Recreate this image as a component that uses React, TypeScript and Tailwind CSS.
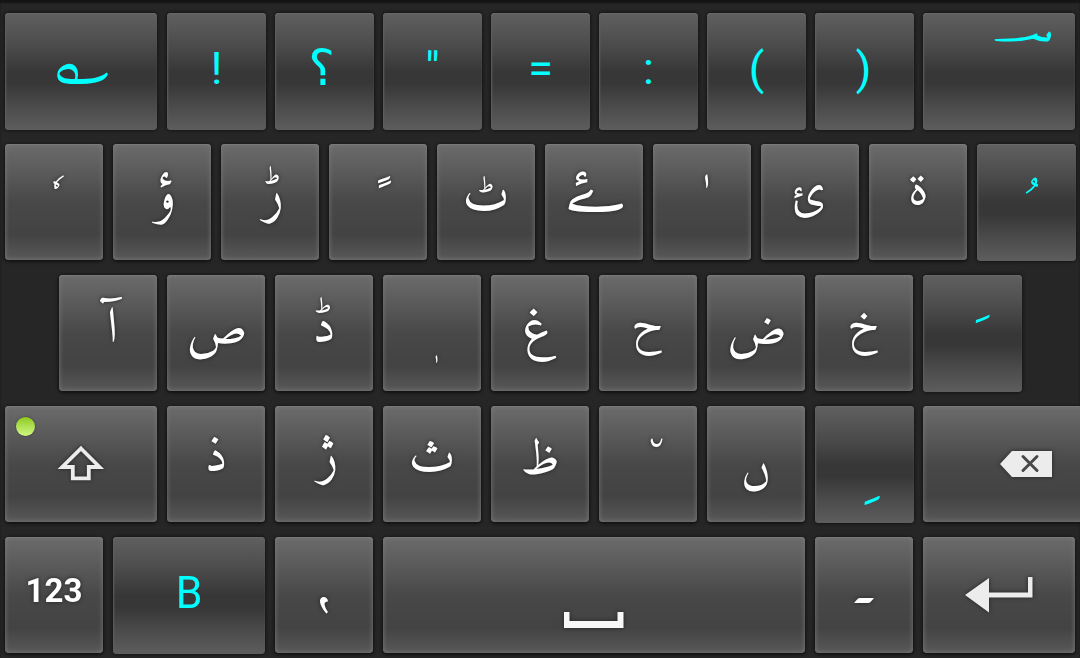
import type { ReactNode } from "react";
import clsx from "clsx";

interface KeyDef {
    id: string;
    label: ReactNode;
    // classes that size and place the label inside its key
    place?: string;
    width?: string;
    alt?: boolean;
    font?: "amiri" | "naskh" | "dejavu" | "latin";
}

const fontClass = {
    amiri: "font-[Amiri,'DejaVu_Sans',serif]",
    naskh: "font-['Noto_Naskh_Arabic','DejaVu_Sans',serif]",
    dejavu: "font-['DejaVu_Sans',sans-serif]",
    latin: "font-[Roboto,sans-serif]",
};

const ShiftIcon = () => (
    <svg width="48" height="38" viewBox="0 0 48 38" fill="none">
        <path d="M24 3.5 L42.5 22 H31.8 V33.4 H15.8 V22 H5.2 Z" stroke="#ececec" strokeWidth="3.8" />
    </svg>
);

const DeleteIcon = () => (
    <svg width="52" height="28" viewBox="0 0 52 28">
        <path d="M0 14 L12 1 H52 V27 H12 Z" fill="#ececec" />
        <path d="M23 6.5 L37 20.5 M37 6.5 L23 20.5" stroke="#484848" strokeWidth="3" strokeLinecap="round" />
    </svg>
);

const SpaceIcon = () => (
    <svg width="62" height="18" viewBox="0 0 62 18">
        <path d="M1 1 H6.5 V10 H54.5 V1 H60.5 V17 H1 Z" fill="#f7f7f7" />
    </svg>
);

const EnterIcon = () => (
    <svg width="68" height="36" viewBox="0 0 68 36">
        <path d="M0 18 L24 1 V15.5 H63 V0 H67.5 V20.5 H24 V35.5 Z" fill="#ececec" />
    </svg>
);

const rows: { id: string; className?: string; keys: KeyDef[] }[] = [
    {
        id: "symbols",
        keys: [
            { id: "verse", label: "\u060e", alt: true, font: "naskh", width: "w-[152px]", place: "mt-[24px] text-[66px]" },
            { id: "exclaim", label: "!", alt: true, font: "latin", place: "mt-[33px] text-[45px]" },
            { id: "question", label: "؟", alt: true, font: "dejavu", place: "mt-[30px] -ml-[6px] text-[50px]" },
            { id: "quote", label: '"', alt: true, font: "latin", place: "mt-[33px] text-[45px]" },
            { id: "equals", label: "=", alt: true, font: "latin", place: "mt-[33px] text-[45px]" },
            { id: "colon", label: ":", alt: true, font: "latin", place: "mt-[33px] text-[45px]" },
            { id: "paren-l", label: "(", alt: true, font: "latin", place: "mt-[33px] text-[45px]" },
            { id: "paren-r", label: ")", alt: true, font: "latin", place: "mt-[33px] -ml-[2px] text-[45px]" },
            { id: "takhallus", label: "\u00a0\u0614", alt: true, font: "amiri", width: "w-[152px]", place: "mt-[10px] ml-[34px] text-[126px] scale-y-60" },
        ],
    },
    {
        id: "top",
        keys: [
            { id: "inverted-damma", label: "\u00a0\u0657", font: "amiri", place: "mt-[50px] text-[44px]" },
            { id: "waw-hamza", label: "ؤ", font: "amiri", place: "mt-[28px] ml-[8px] text-[50px] scale-y-120" },
            { id: "rreh", label: "ڑ", font: "amiri", place: "mt-[27px] ml-[8px] text-[50px] scale-y-120" },
            { id: "fathatan", label: "\u00a0\u064b", font: "naskh", place: "mt-[17px] ml-[14px] text-[60px]" },
            { id: "tteh", label: "ٹ", font: "amiri", place: "mt-[29px] text-[50px] scale-y-110" },
            { id: "yeh-barree-hamza", label: "ۓ", font: "naskh", place: "mt-[17px] text-[72px] scale-x-110" },
            { id: "super-alef", label: "\u00a0\u0670", font: "naskh", place: "mt-[20px] ml-[9px] text-[52px]" },
            { id: "yeh-hamza", label: "ئ", font: "naskh", place: "mt-[21px] -ml-[4px] text-[55px]" },
            { id: "teh-marbuta", label: "ة", font: "naskh", place: "mt-[26px] text-[50px]" },
            { id: "damma", label: "\u00a0\u064f", alt: true, font: "amiri", place: "mt-[55px] text-[52px]" },
        ],
    },
    {
        id: "home",
        className: "pl-[54px]",
        keys: [
            { id: "alef-madda", label: "آ", font: "amiri", place: "mt-[30px] ml-[9px] text-[50px]" },
            { id: "sad", label: "ص", font: "amiri", place: "mt-[36px] ml-[2px] text-[50px]" },
            { id: "ddal", label: "ڈ", font: "amiri", place: "mt-[28px] text-[53px]" },
            { id: "sub-alef", label: "\u00a0\u0656", font: "naskh", place: "mt-[56px] ml-[9px] text-[30px]" },
            { id: "ghain", label: "غ", font: "naskh", place: "mt-[31px] -ml-[4px] text-[56px]" },
            { id: "hah", label: "ح", font: "naskh", place: "mt-[32px] -ml-[2px] text-[50px]" },
            { id: "dad", label: "ض", font: "amiri", place: "mt-[37px] ml-[2px] text-[49px]" },
            { id: "khah", label: "خ", font: "naskh", place: "mt-[32px] -ml-[2px] text-[50px]" },
            { id: "fatha", label: "\u00a0\u064e", alt: true, font: "naskh", place: "mt-[16px] ml-[20px] text-[68px]" },
        ],
    },
    {
        id: "bottom",
        keys: [
            { id: "shift", label: <ShiftIcon />, width: "w-[152px]", place: "mt-[39px]" },
            { id: "thal", label: "ذ", font: "amiri", place: "mt-[27px] text-[52px]" },
            { id: "jeh", label: "ژ", font: "amiri", place: "mt-[27px] ml-[9px] text-[50px] scale-y-115" },
            { id: "theh", label: "ث", font: "amiri", place: "mt-[29px] text-[50px]" },
            { id: "zah", label: "ظ", font: "amiri", place: "mt-[31px] text-[50px]" },
            { id: "ghunna-mark", label: "\u00a0\u0658", font: "naskh", place: "mt-[13px] ml-[17px] text-[62px]" },
            { id: "noon-ghunna", label: "ں", font: "amiri", place: "mt-[43px] text-[53px]" },
            { id: "kasra", label: "\u00a0\u0650", alt: true, font: "naskh", place: "mt-[30px] ml-[15px] text-[75px]" },
            { id: "delete", label: <DeleteIcon />, width: "w-[206px]", place: "mt-[44px]" },
        ],
    },
    {
        id: "space-row",
        keys: [
            { id: "numbers", label: "123", font: "latin", place: "mt-[37px] text-[33px] font-bold" },
            { id: "mode", label: "B", alt: true, font: "latin", width: "w-[152px]", place: "mt-[33px] text-[45px] scale-x-95" },
            { id: "comma", label: "،", font: "naskh", place: "mt-[46px] text-[62px] -scale-y-100" },
            { id: "space", label: <SpaceIcon />, width: "w-[422px]", place: "mt-[74px]" },
            { id: "full-stop", label: "۔", font: "amiri", place: "mt-[25px] text-[56px]" },
            { id: "enter", label: <EnterIcon />, width: "w-[152px]", place: "mt-[40px]" },
        ],
    },
];

function Key({ def }: { def: KeyDef }) {
    const { id, label, place, width, alt, font } = def;
    return (
        <button
            className={clsx(
                "relative flex shrink-0 items-start justify-center rounded-[4px] leading-none whitespace-pre",
                fontClass[font ?? "latin"],
                alt
                    ? "h-[117px] bg-[linear-gradient(#606060,#4b4b4b_28%,#373737_50%,#373737_60%,#4b4b4b_80%,#5d5d5d)] text-[#00ffff] shadow-[inset_0_1px_1px_#6a6a6a,inset_1px_0_2px_#606060,0_0_3px_1px_#151515]"
                    : "h-[116px] bg-[linear-gradient(#6b6b6b,#5a5a5a_25%,#484848_50%,#434343_78%,#585858)] text-white shadow-[inset_0_0_5px_#7c7c7c,inset_0_1px_0_#777777,0_1px_3px_1px_#121212]",
                width ?? (alt ? "-mr-px w-[99px]" : "w-[98px]"),
            )}
        >
            <span className={clsx("block", place, !alt && "drop-shadow-[0_0_2px_#222222]")}>{label}</span>
            {id === "shift" && (
                <i className="absolute top-[11px] left-[11px] size-[19px] rounded-full bg-linear-to-b from-[#8fc911] to-[#d0fa80] shadow-[0_0_2px_#333333]" />
            )}
        </button>
    );
}

export default function App() {
    return (
        <div className="h-[658px] w-[1080px] overflow-hidden bg-[#262626] pt-[13px] shadow-[inset_0_3px_2px_#141414]">
            {rows.map((row) => (
                <div key={row.id} className="h-[131px] pl-[5px]">
                    <div className={clsx("flex gap-[10px]", row.className)}>
                        {row.keys.map((def) => (
                            <Key key={def.id} def={def} />
                        ))}
                    </div>
                </div>
            ))}
        </div>
    );
}
